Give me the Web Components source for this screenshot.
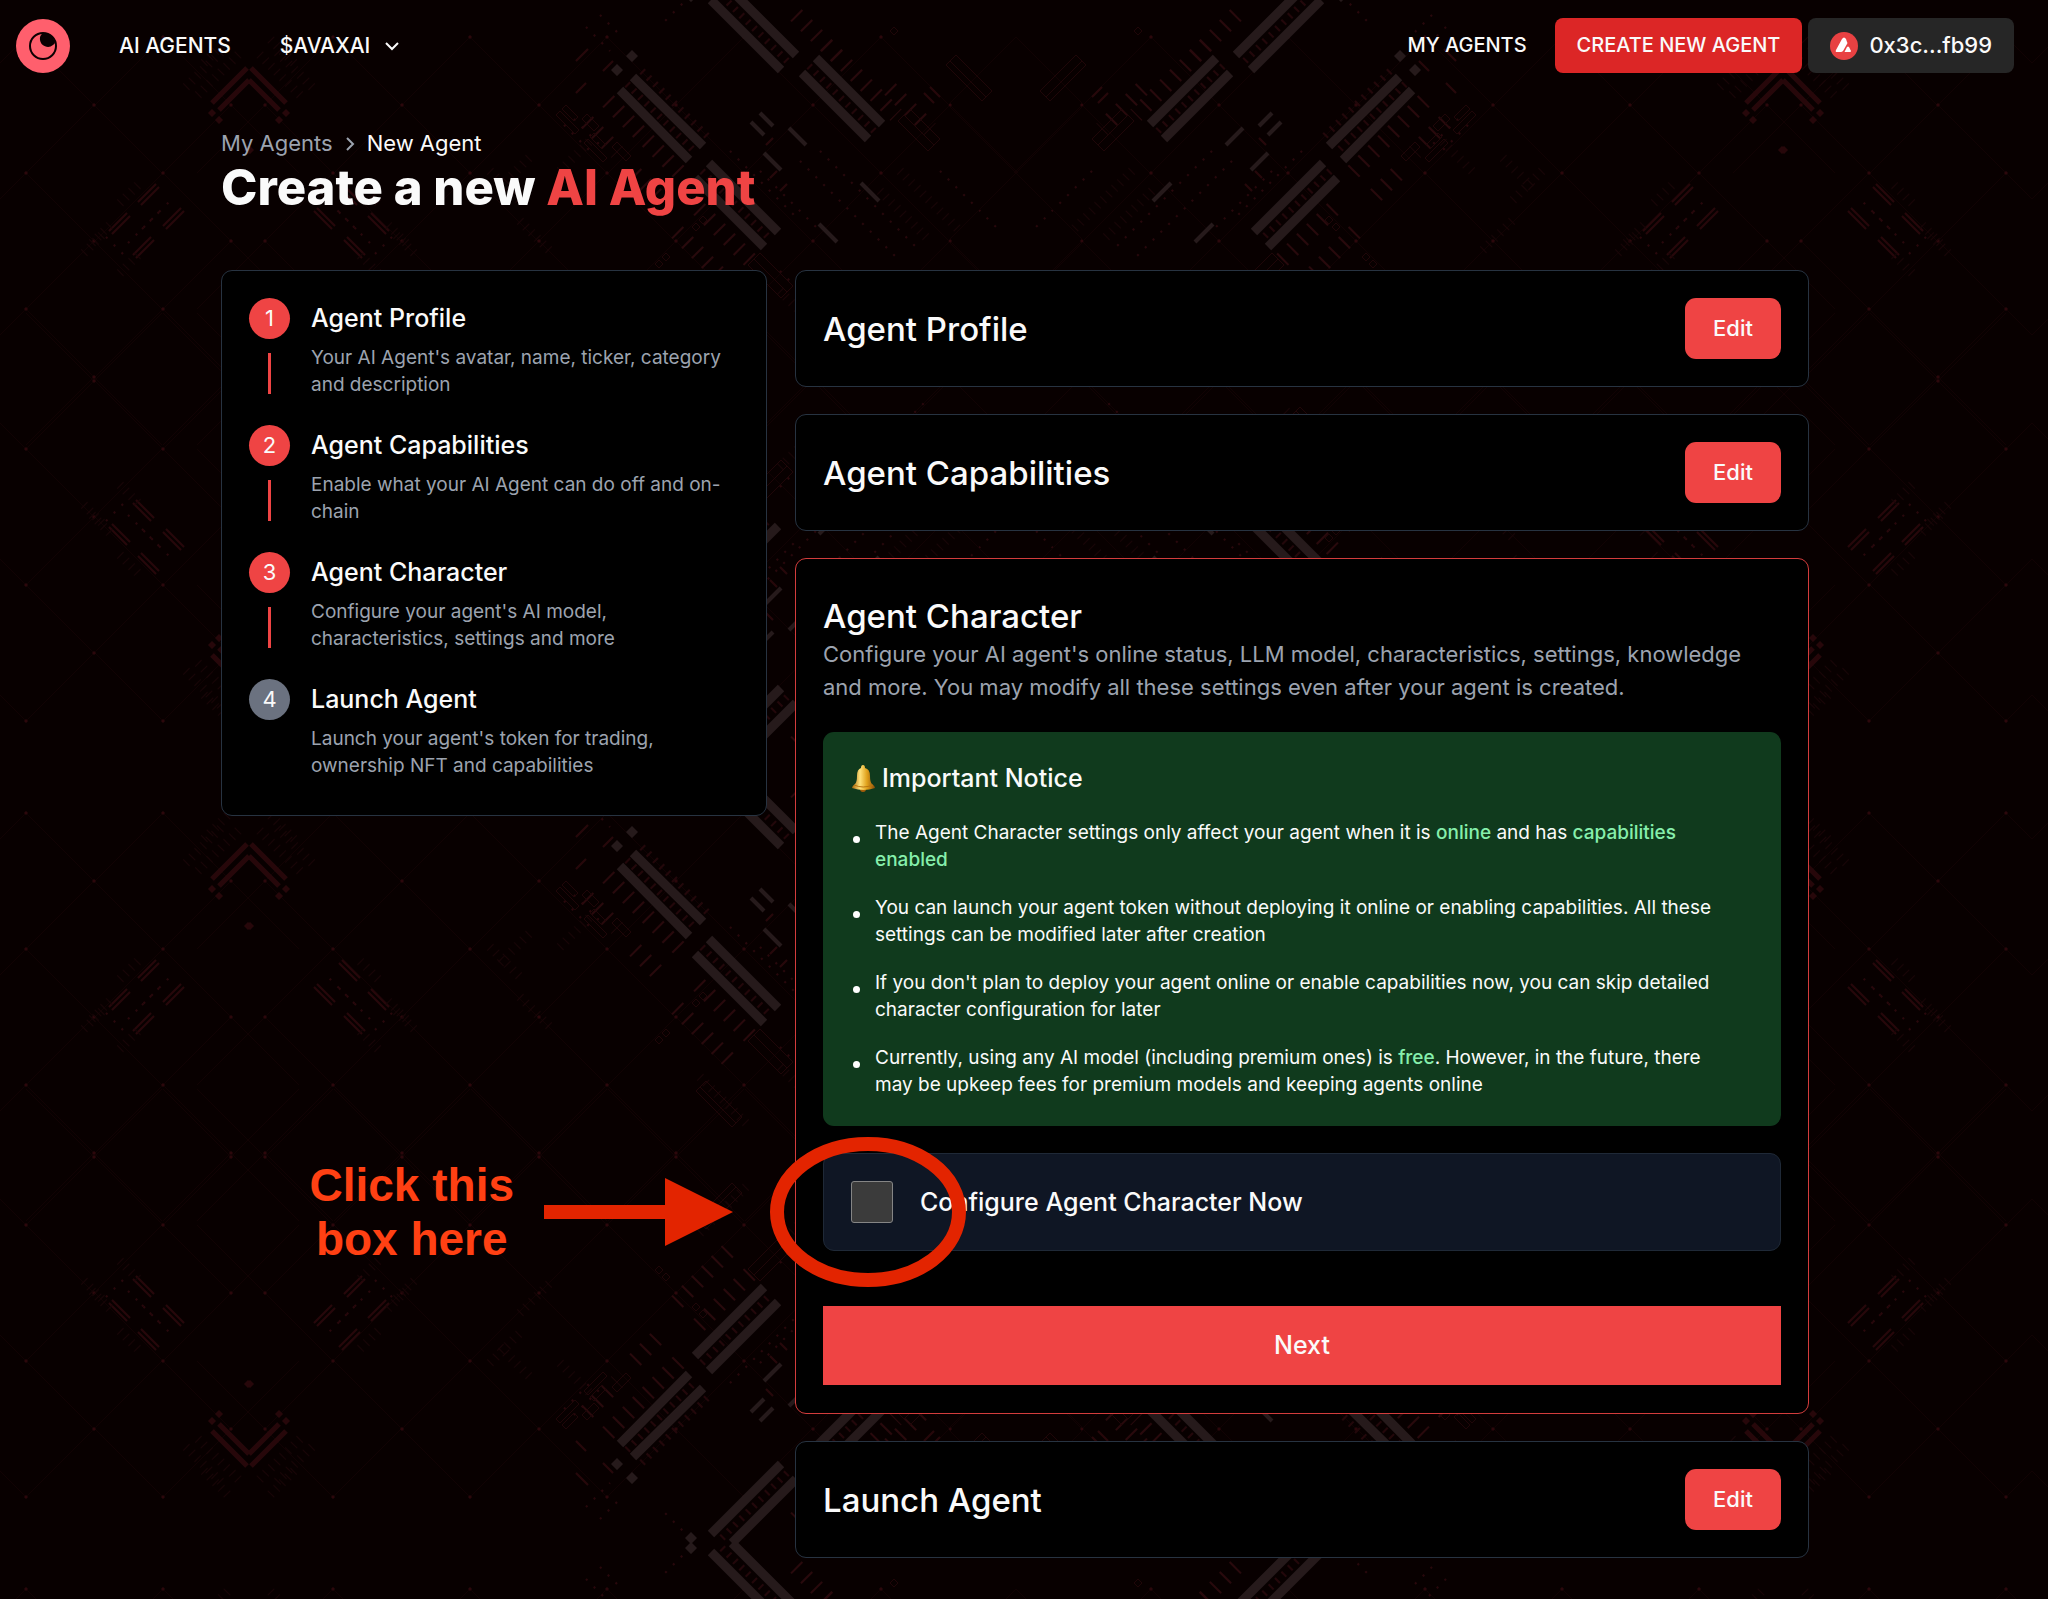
<!DOCTYPE html>
<html lang="en">
<head>
<meta charset="utf-8">
<meta name="viewport" content="width=device-width, initial-scale=1">
<title>Create a new AI Agent</title>
<style>
    body {
        margin: 0;
        background: #080000;
        color: #fafafa;
        font-family: Inter, "Noto Sans", sans-serif;
        --red: #ef4444;
        --muted: #9ca3af;
        --line: #273341;
    }
</style>
</head>
<body>
<agent-page>
    <site-header slot="header"></site-header>
    <page-title slot="title"></page-title>
    <step-list slot="side">
        <step-item number="1" heading="Agent Profile">Your AI Agent's avatar, name, ticker, category and description</step-item>
        <step-item number="2" heading="Agent Capabilities">Enable what your AI Agent can do off and on-chain</step-item>
        <step-item number="3" heading="Agent Character">Configure your agent's AI model, characteristics, settings and more</step-item>
        <step-item number="4" heading="Launch Agent" pending>Launch your agent's token for trading, ownership NFT and capabilities</step-item>
    </step-list>
    <section-card heading="Agent Profile"></section-card>
    <section-card heading="Agent Capabilities"></section-card>
    <character-card></character-card>
    <section-card heading="Launch Agent"></section-card>
</agent-page>

<script>
// Circuit pattern behind the page. One quarter is drawn and mirrored both ways.
class CircuitBackdrop extends HTMLElement {
    constructor() {
        super();
        this.attachShadow({ mode: 'open' });
    }

    connectedCallback() {
        this.render();
    }

    grid() {
        let lines = '';
        let dots = '';
        for (let row = 0; row < 6; row++) {
            const y = 46 + row * 68;
            for (let col = 0; col < 8; col++) {
                const left = (row % 2 ? 231 : 163) - col * 137;
                const right = (row % 2 ? 265 : 333) + col * 137;
                for (const x of [left, right]) {
                    if (x < 0 || x > 1016) continue;
                    dots += `M${x - 2} ${y}l2 -2l2 2l-2 2z`;
                    lines += `M${x - 68} ${y + 68}L${x} ${y}L${x + 68} ${y + 68}`;
                }
            }
        }
        return `<path class="thread" d="${lines}"/><path class="node" d="${dots}"/>`;
    }

    render() {
        this.shadowRoot.innerHTML = `
            <style>
                :host {
                    display: block;
                    overflow: hidden;
                }
                svg {
                    display: block;
                    width: 100%;
                    height: 100%;
                }
                path {
                    fill: none;
                }
                .thread { stroke: #110203; stroke-width: 1; }
                .node { fill: #2c070b; }
                .bar { stroke: #261a1b; stroke-width: 9; }
                .chip { stroke: #261a1b; stroke-width: 4; }
                .block { fill: #261a1b; }
                .wine { stroke: #27070a; stroke-width: 5; }
                .slim { stroke: #27070a; stroke-width: 2; }
                .cell { fill: #27070a; }
                .tick { stroke: #29090c; stroke-width: 16; stroke-dasharray: 2 12; }
                .comb { stroke: #23070a; stroke-width: 7; stroke-dasharray: 2 7; }
                .fine { stroke: #180406; stroke-width: 9; stroke-dasharray: 1 7; }
                .dust { stroke: #29070b; stroke-width: 2; stroke-dasharray: 2 9; }
                .frame { stroke: #1f0608; stroke-width: 1; }
            </style>
            <svg aria-hidden="true">
                <defs>
                    <g id="emblem">
                        <path class="wine" d="M212 112L247 77M219 119L249 89"/>
                        <path class="cell" d="M208 122l4 -4l4 4l-4 4zM215 129l4 -4l4 4l-4 4zM246 159l4 -4l4 4l-4 4z"/>
                        <path class="fine" d="M198 104L240 62M186 96L222 60M204 72L232 44"/>
                        <path class="slim" d="M138 211L156 193M141 214L159 196M109 240L127 222M112 243L130 225M166 238L184 220M163 235L181 217M136 267L154 249M133 264L151 246"/>
                        <path class="fine" d="M120 212L142 190M92 252L112 232M120 282L140 262M84 262L104 242"/>
                        <path class="dust" d="M128 252L170 210M142 238L160 220M106 246L124 264"/>
                    </g>
                    <g id="quarter">
                        ${this.grid()}
                        <use href="#emblem"/>
                        <use href="#emblem" transform="translate(498 0) scale(-1 1)"/>
                        <path class="tick" d="M608 110L680 182M587 131L617 161M635 183L658 206M677 241L735 299M699 218L756 275M890 98L930 138M826 54L896 124M796 24L840 68"/>
                        <path class="comb" d="M627 93L697 163M702 180L771 249M722 5L788 71M809 75L875 141M642 80L708 146"/>
                        <path class="fine" d="M490 180L520 210M520 230L550 260M500 196L530 166M560 180L590 150M880 200L930 250M700 310L750 360M780 300L830 350M900 180L960 240"/>
                        <path class="dust" d="M586 36L610 60M600 24L620 44M564 134L592 162M574 128L602 156M800 170L900 270M820 160L920 260M860 300L930 370M730 160L800 230M760 180L820 240M780 280L850 350M940 180L1000 240M690 5L660 35"/>
                        <path class="slim" d="M576 102L586 92M603 80L613 70M766 154L773 147M770 187L777 180M780 200L787 193M576 70L588 58M930 96l10 10M924 102l10 10"/>
                        <path class="frame" d="M556 124l4 -4l19 19l-4 4zM562 118l4 -4l12 12l-4 4zM584 152l4 -4l19 19l-4 4zM590 146l4 -4l12 12l-4 4zM582 128l5 -5l12 12l-5 5zM612 156l5 -5l14 14l-5 5zM696 324l10 -10l36 36l-10 10zM700 320l36 36M946 74l10 -10l36 36l-10 10zM950 70l36 36M898 130l12 -12l30 30l-12 12zM904 124l30 30M748 274l12 -12l33 33l-12 12zM754 268l33 33"/>
                        <path class="frame" d="M655 273l4 -4l4 4l-4 4zM662 266l4 -4l4 4l-4 4zM890 40l4 -4l4 4l-4 4zM692 236l4 -4l4 4l-4 4zM699 229l4 -4l4 4l-4 4z"/>
                        <path class="bar" d="M633 86L703 155M620 99L689 169M709 172L778 241M695 187L764 256M711 9L781 79M732 0L796 64M816 67L882 133M802 82L868 148"/>
                        <path class="chip" d="M760 122L773 135M751 131L764 144M789 137L806 154M764 162L781 179M861 192L879 210M819 233L837 251"/>
                        <path class="block" d="M626 65l6 -6l6 6l-6 6zM611 79l6 -6l6 6l-6 6zM685 5l6 -6l6 6l-6 6z"/>
                        <path class="thread" d="M1016 46L948 114L1016 182L948 250L1016 318"/>
                    </g>
                    <g id="half">
                        <use href="#quarter"/>
                        <use href="#quarter" transform="translate(0 776) scale(1 -1)"/>
                    </g>
                    <pattern id="tile" width="2032" height="776" y="-9" patternUnits="userSpaceOnUse">
                        <use href="#half"/>
                        <use href="#half" transform="translate(2032 0) scale(-1 1)"/>
                    </pattern>
                </defs>
                <rect width="100%" height="100%" fill="url(#tile)"/>
            </svg>
        `;
    }
}

class AgentPage extends HTMLElement {
    constructor() {
        super();
        this.attachShadow({ mode: 'open' });
    }

    connectedCallback() {
        this.shadowRoot.innerHTML = `
            <style>
                :host {
                    display: grid;
                    min-height: 100vh;
                }
                circuit-backdrop, .page {
                    grid-area: 1 / 1;
                    min-width: 0;
                }
                circuit-backdrop {
                    contain: size;
                }
                .page {
                    z-index: 1;
                    padding-right: 18px;
                }
                main {
                    max-width: 1588px;
                    margin: 0 auto;
                    padding: 36px 0 42px;
                }
                .columns {
                    display: grid;
                    grid-template-columns: 546px minmax(0, 1fr);
                    gap: 28px;
                    align-items: start;
                    margin-top: 55px;
                }
                .cards {
                    display: grid;
                    gap: 27px;
                }
            </style>
            <circuit-backdrop></circuit-backdrop>
            <div class="page">
                <slot name="header"></slot>
                <main>
                    <slot name="title"></slot>
                    <div class="columns">
                        <slot name="side"></slot>
                        <div class="cards"><slot></slot></div>
                    </div>
                </main>
            </div>
        `;
    }
}

class SiteHeader extends HTMLElement {
    constructor() {
        super();
        this.attachShadow({ mode: 'open' });
    }

    connectedCallback() {
        this.shadowRoot.innerHTML = `
            <style>
                :host {
                    display: block;
                }
                header, nav, .right {
                    display: flex;
                    align-items: center;
                }
                header {
                    justify-content: space-between;
                    padding: 18px 16px 18px 15px;
                }
                svg {
                    display: block;
                }
                nav {
                    gap: 49px;
                }
                a, button {
                    color: inherit;
                    font: 500 22px/33px Inter, "Noto Sans", sans-serif;
                    text-decoration: none;
                }
                button {
                    display: flex;
                    align-items: center;
                    margin: 0;
                    padding: 0;
                    border: 0;
                    background: none;
                    cursor: pointer;
                }
                .menu {
                    gap: 14px;
                }
                nav a, .menu {
                    font-size: 21px;
                }
                .right {
                    gap: 6px;
                }
                .right a {
                    font-size: 20px;
                }
                .mine {
                    margin-right: 22px;
                }
                .create, .wallet {
                    display: flex;
                    align-items: center;
                    height: 55px;
                    box-sizing: border-box;
                    padding: 11px 22px;
                    border-radius: 8px;
                }
                .create {
                    background: #dc2626;
                }
                .wallet {
                    gap: 11px;
                    background: #262626;
                }
            </style>
            <header>
                <nav aria-label="Main">
                    <a href="#" aria-label="Home">
                        <svg width="55" height="55" viewBox="0 0 55 55">
                            <circle cx="28" cy="28" r="27" fill="#ff5f6d"/>
                            <circle cx="28" cy="28" r="13" fill="none" stroke="#0c0002" stroke-width="2"/>
                            <path d="M28 15A7 7 0 0 0 25 22A8 8 0 0 0 38 27Q40 26 40 24A13 13 0 0 0 28 15z" fill="#0c0002"/>
                        </svg>
                    </a>
                    <a href="#">AI AGENTS</a>
                    <button class="menu" type="button">$AVAXAI
                        <svg width="16" height="16" viewBox="0 0 16 16" fill="none" stroke="currentColor" stroke-width="2"><path d="M2 5l6 6l6 -6"/></svg>
                    </button>
                </nav>
                <div class="right">
                    <a class="mine" href="#">MY AGENTS</a>
                    <a class="create" href="#">CREATE NEW AGENT</a>
                    <button class="wallet" type="button">
                        <svg width="28" height="28" viewBox="0 0 28 28">
                            <circle cx="14" cy="14" r="14" fill="#e84142"/>
                            <path d="M12 7q2 -3 4 0l1 3q1 1 0 2l-4 7q-1 1 -2 1H7q-2 0 -1 -2zM17 15q1 -1 2 0l2 4q0 1 -1 1h-5q-1 0 0 -1z" fill="#fff"/>
                        </svg>
                        0x3c...fb99
                    </button>
                </div>
            </header>
        `;
    }
}

class PageTitle extends HTMLElement {
    constructor() {
        super();
        this.attachShadow({ mode: 'open' });
    }

    connectedCallback() {
        this.shadowRoot.innerHTML = `
            <style>
                :host {
                    display: block;
                }
                nav {
                    display: flex;
                    align-items: center;
                    gap: 11px;
                    font-size: 22px;
                    line-height: 33px;
                }
                a {
                    color: var(--muted);
                    text-decoration: none;
                }
                svg {
                    color: var(--muted);
                }
                h1 {
                    margin: 0;
                    font-size: 49px;
                    line-height: 55px;
                    font-weight: 800;
                }
                h1 span {
                    color: var(--red);
                }
            </style>
            <nav aria-label="Breadcrumb">
                <a href="#">My Agents</a>
                <svg width="12" height="16" viewBox="0 0 12 16" fill="none" stroke="currentColor" stroke-width="2"><path d="M3 2l6 6l-6 6"/></svg>
                <span aria-current="page">New Agent</span>
            </nav>
            <h1>Create a new <span>AI Agent</span></h1>
        `;
    }
}

class StepList extends HTMLElement {
    constructor() {
        super();
        this.attachShadow({ mode: 'open' });
    }

    connectedCallback() {
        this.shadowRoot.innerHTML = `
            <style>
                :host {
                    display: grid;
                    gap: 27px;
                    padding: 27px 27px 36px;
                    border: 1px solid var(--line);
                    border-radius: 11px;
                    background: #000;
                }
            </style>
            <slot></slot>
        `;
    }
}

class StepItem extends HTMLElement {
    constructor() {
        super();
        this.attachShadow({ mode: 'open' });
    }

    connectedCallback() {
        this.shadowRoot.innerHTML = `
            <style>
                :host {
                    display: grid;
                    grid-template-columns: 41px minmax(0, 1fr);
                    gap: 21px;
                }
                .rail {
                    display: grid;
                    justify-items: center;
                    align-content: start;
                    gap: 14px;
                }
                .number {
                    width: 41px;
                    border-radius: 50%;
                    background: var(--red);
                    font-size: 22px;
                    line-height: 41px;
                    text-align: center;
                }
                .rail::after {
                    content: "";
                    width: 3px;
                    height: 41px;
                    background: var(--red);
                }
                :host([pending]) .number {
                    background: #6b7280;
                }
                :host([pending]) .rail::after {
                    background: none;
                }
                h3 {
                    margin: 0 0 6px;
                    font-size: 25px;
                    line-height: 40px;
                    font-weight: 500;
                }
                p {
                    margin: 0;
                    color: var(--muted);
                    font-size: 19px;
                    line-height: 27px;
                }
            </style>
            <div class="rail"><span class="number">${this.getAttribute('number')}</span></div>
            <div>
                <h3>${this.getAttribute('heading')}</h3>
                <p><slot></slot></p>
            </div>
        `;
    }
}

class SectionCard extends HTMLElement {
    constructor() {
        super();
        this.attachShadow({ mode: 'open' });
    }

    connectedCallback() {
        this.shadowRoot.innerHTML = `
            <style>
                :host {
                    display: flex;
                    align-items: center;
                    justify-content: space-between;
                    padding: 27px;
                    border: 1px solid var(--line);
                    border-radius: 11px;
                    background: #000;
                }
                h2 {
                    margin: 0;
                    font-size: 33px;
                    line-height: 44px;
                    font-weight: 500;
                }
                button {
                    min-width: 96px;
                    height: 61px;
                    border: 0;
                    border-radius: 11px;
                    background: var(--red);
                    color: inherit;
                    font: 500 22px/33px Inter, "Noto Sans", sans-serif;
                    cursor: pointer;
                }
            </style>
            <h2>${this.getAttribute('heading')}</h2>
            <button type="button">Edit</button>
        `;
    }
}

class ImportantNotice extends HTMLElement {
    constructor() {
        super();
        this.attachShadow({ mode: 'open' });
    }

    connectedCallback() {
        this.shadowRoot.innerHTML = `
            <style>
                :host {
                    display: block;
                    padding: 28px;
                    border-radius: 11px;
                    background: #103a1d;
                }
                h3 {
                    display: flex;
                    align-items: center;
                    gap: 6px;
                    margin: 0 0 22px;
                    font-size: 25px;
                    line-height: 37px;
                    font-weight: 500;
                }
                ul {
                    display: grid;
                    gap: 21px;
                    margin: 0;
                    padding: 0 20px 0 0;
                    list-style: none;
                    font-size: 19px;
                    line-height: 27px;
                }
                li {
                    display: grid;
                    grid-template-columns: 7px minmax(0, 1fr);
                    gap: 15px;
                    padding-left: 2px;
                }
                li::before {
                    content: "";
                    height: 7px;
                    margin-top: 17px;
                    border-radius: 50%;
                    background: #fff;
                }
                b {
                    color: #86efac;
                    font-weight: 500;
                }
            </style>
            <h3>
                <svg width="25" height="28" viewBox="0 0 25 28" aria-hidden="true">
                    <defs>
                        <linearGradient id="brass">
                            <stop offset="0" stop-color="#a8660c"/>
                            <stop offset=".35" stop-color="#ffe27a"/>
                            <stop offset=".65" stop-color="#e0a11b"/>
                            <stop offset="1" stop-color="#8a4b08"/>
                        </linearGradient>
                    </defs>
                    <circle cx="12" cy="24" r="3" fill="#a35d0a"/>
                    <path d="M12 0q2 0 2 3q5 1 5 8q0 6 2 8q3 2 3 4q-11 4 -23 0q0 -2 3 -4q2 -2 2 -8q0 -7 4 -8q0 -3 2 -3z" fill="url(#brass)"/>
                    <path d="M3 20q9 4 19 0" fill="none" stroke="#b9750f"/>
                </svg>
                Important Notice
            </h3>
            <ul>
                <li><span>The Agent Character settings only affect your agent when it is <b>online</b> and has <b>capabilities enabled</b></span></li>
                <li><span>You can launch your agent token without deploying it online or enabling capabilities. All these settings can be modified later after creation</span></li>
                <li><span>If you don't plan to deploy your agent online or enable capabilities now, you can skip detailed character configuration for later</span></li>
                <li><span>Currently, using any AI model (including premium ones) is <b>free</b>. However, in the future, there may be upkeep fees for premium models and keeping agents online</span></li>
            </ul>
        `;
    }
}

// Callout drawn over the page: text, arrow and a ring round the tick box.
class ClickHint extends HTMLElement {
    constructor() {
        super();
        this.attachShadow({ mode: 'open' });
    }

    connectedCallback() {
        this.shadowRoot.innerHTML = `
            <style>
                :host {
                    display: flex;
                    align-items: center;
                    gap: 30px;
                    color: #ff4013;
                    font: bold 46px/54px "Liberation Sans", Arial, sans-serif;
                    text-align: center;
                    pointer-events: none;
                }
                span {
                    white-space: nowrap;
                }
                svg {
                    display: block;
                }
            </style>
            <span>Click this<br>box here</span>
            <svg width="422" height="151" viewBox="0 0 422 151">
                <path d="M0 69H121V42L189 76L121 110V83H0z" fill="#e32400"/>
                <ellipse cx="324" cy="76" rx="91" ry="68" fill="none" stroke="#e32400" stroke-width="14"/>
            </svg>
        `;
    }
}

class CharacterCard extends HTMLElement {
    constructor() {
        super();
        this.attachShadow({ mode: 'open' });
    }

    connectedCallback() {
        this.shadowRoot.innerHTML = `
            <style>
                :host {
                    display: block;
                    padding: 35px 27px 28px;
                    border: 1px solid #d33c3c;
                    border-radius: 11px;
                    background: #000;
                }
                h2 {
                    margin: 0;
                    font-size: 33px;
                    line-height: 44px;
                    font-weight: 500;
                }
                p {
                    margin: 0 0 28px;
                    color: var(--muted);
                    font-size: 22px;
                    line-height: 33px;
                }
                .option {
                    position: relative;
                    display: flex;
                    align-items: center;
                    gap: 27px;
                    margin: 27px 0 55px;
                    padding: 27px;
                    border: 1px solid #1f2937;
                    border-radius: 11px;
                    background: #0f1624;
                    font-size: 25px;
                    font-weight: 500;
                }
                input {
                    appearance: none;
                    width: 42px;
                    height: 42px;
                    margin: 0;
                    border: 1px solid #858585;
                    border-radius: 3px;
                    background: #3b3b3b;
                }
                input:checked {
                    background: var(--red);
                }
                click-hint {
                    position: absolute;
                    right: calc(100% - 142px);
                    top: -18px;
                }
                button {
                    display: block;
                    width: 100%;
                    height: 79px;
                    border: 0;
                    background: var(--red);
                    color: inherit;
                    font: 500 25px/33px Inter, "Noto Sans", sans-serif;
                    cursor: pointer;
                }
            </style>
            <h2>Agent Character</h2>
            <p>Configure your AI agent's online status, LLM model, characteristics, settings, knowledge and more. You may modify all these settings even after your agent is created.</p>
            <important-notice></important-notice>
            <div class="option">
                <input type="checkbox" id="configure">
                <label for="configure">Configure Agent Character Now</label>
                <click-hint></click-hint>
            </div>
            <button type="button">Next</button>
        `;
    }
}

customElements.define('circuit-backdrop', CircuitBackdrop);
customElements.define('agent-page', AgentPage);
customElements.define('site-header', SiteHeader);
customElements.define('page-title', PageTitle);
customElements.define('step-list', StepList);
customElements.define('step-item', StepItem);
customElements.define('section-card', SectionCard);
customElements.define('important-notice', ImportantNotice);
customElements.define('click-hint', ClickHint);
customElements.define('character-card', CharacterCard);
</script>
</body>
</html>
